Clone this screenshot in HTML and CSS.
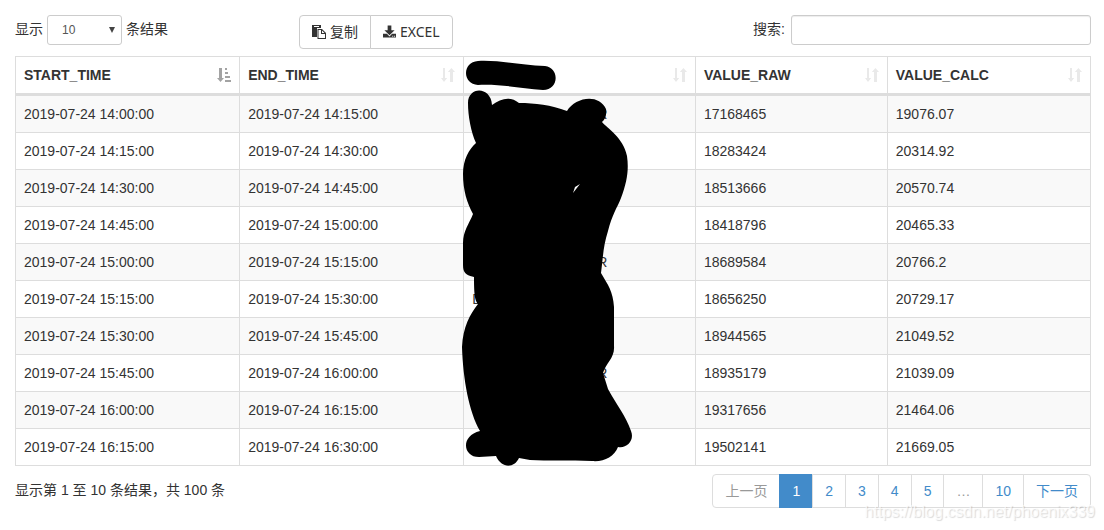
FILE: index.html
```html
<!DOCTYPE html>
<html lang="zh-CN">
<head>
<meta charset="utf-8">
<title>数据列表</title>
<link rel="stylesheet" href="styles.css">
</head>
<body>
<svg class="defs" width="0" height="0" aria-hidden="true">
  <symbol id="sort" viewBox="0 0 14 14">
    <path d="M2 0h2v10h2.200L3 14 0 10h2zM9 14V4H6.800L10.500 0l3.500 4h-2v10z"/>
  </symbol>
  <symbol id="sort-asc" viewBox="0 0 14 14">
    <path d="M2 0h3v10h2L3.500 14 0 10h2zM8 0h2v2H8zM8 4h3v2H8zM8 8h5v2H8zM8 12h6v2H8z"/>
  </symbol>
</svg>
<main class="page">
  <div class="toolbar">
    <label class="length">显示
      <span class="select-box"><select class="control length-select"><option>10</option><option>25</option><option>50</option></select><svg class="caret" viewBox="0 0 6 6" aria-hidden="true"><path d="M0 0h6L3 6z"/></svg></span>
      条结果</label>
    <div class="buttons">
      <button type="button" class="btn"><svg class="btn-icon" viewBox="0 0 14 14" aria-hidden="true"><path fill-rule="evenodd" d="M0 0h9v3H5v9H0zM2 1v1h5V1zM5.500 4H10l4 4v6H5.500zM6.500 5v8H13V9H9V5zM10 5.500V8h2.500z"/></svg>复制</button>
      <button type="button" class="btn"><svg class="btn-icon narrow" viewBox="0 0 14 14" aria-hidden="true"><path fill-rule="evenodd" d="M5 0h4v5h3.500L7 10.500 1.500 5H5zM0 9h4.200L7 11.800 9.800 9H14v4H0zM10 11v1h1v-1zM12 11v1h1v-1z"/></svg>EXCEL</button>
    </div>
    <label class="search">搜索:
      <input type="search" class="control search-input"></label>
  </div>
  <div class="table-wrap">
    <table class="grid">
      <colgroup><col class="c-start"><col class="c-end"><col class="c-name"><col class="c-raw"><col class="c-calc"></colgroup>
      <thead>
        <tr>
          <th><span class="head">START_TIME<svg class="sort active"><use href="#sort-asc"/></svg></span></th>
          <th><span class="head">END_TIME<svg class="sort"><use href="#sort"/></svg></span></th>
          <th><span class="head"><span></span><svg class="sort"><use href="#sort"/></svg></span></th>
          <th><span class="head">VALUE_RAW<svg class="sort"><use href="#sort"/></svg></span></th>
          <th><span class="head">VALUE_CALC<svg class="sort"><use href="#sort"/></svg></span></th>
        </tr>
      </thead>
      <tbody>
        <tr><td>2019-07-24 14:00:00</td><td>2019-07-24 14:15:00</td><td class="tail">R</td><td>17168465</td><td>19076.07</td></tr>
        <tr><td>2019-07-24 14:15:00</td><td>2019-07-24 14:30:00</td><td></td><td>18283424</td><td>20314.92</td></tr>
        <tr><td>2019-07-24 14:30:00</td><td>2019-07-24 14:45:00</td><td></td><td>18513666</td><td>20570.74</td></tr>
        <tr><td>2019-07-24 14:45:00</td><td>2019-07-24 15:00:00</td><td></td><td>18418796</td><td>20465.33</td></tr>
        <tr><td>2019-07-24 15:00:00</td><td>2019-07-24 15:15:00</td><td class="tail">R</td><td>18689584</td><td>20766.2</td></tr>
        <tr><td>2019-07-24 15:15:00</td><td>2019-07-24 15:30:00</td><td>D</td><td>18656250</td><td>20729.17</td></tr>
        <tr><td>2019-07-24 15:30:00</td><td>2019-07-24 15:45:00</td><td></td><td>18944565</td><td>21049.52</td></tr>
        <tr><td>2019-07-24 15:45:00</td><td>2019-07-24 16:00:00</td><td class="tail">R</td><td>18935179</td><td>21039.09</td></tr>
        <tr><td>2019-07-24 16:00:00</td><td>2019-07-24 16:15:00</td><td></td><td>19317656</td><td>21464.06</td></tr>
        <tr><td>2019-07-24 16:15:00</td><td>2019-07-24 16:30:00</td><td></td><td>19502141</td><td>21669.05</td></tr>
      </tbody>
    </table>
    <svg class="redaction" viewBox="450 56 200 412" width="200" height="412" aria-hidden="true">
      <path d="M478 61C500 60 520 65 545 66C560 68 559 90 543 90C520 88 500 84 478 85C462 84 462 62 478 61Z"/>
      <path fill-rule="evenodd" d="M468 103C468 86 491 86 492 105C501 98 511 96 519 103C535 103 551 105 567 111C575 97 599 93 606 109C607 115 605 120 602 122C607 128 623 137 627 156C629 170 627 182 621 198C617 208 612 215 608 231C603 247 603 258 601 273C608 285 613 291 614 307V346C615 358 606 363 603 373L608 389C616 404 626 416 631 431C635 441 626 449 618 447C614 457 604 462 592 461C570 460 547 461 530 460L519 458C514 469 501 468 496 456L479 457C463 457 460 436 480 431C469 412 463 379 462 347C463 327 470 314 478 304C475 300 474 296 474 277C466 275 463 273 463 265V243C463 231 469 224 473 214C467 203 463 190 463 174C463 160 469 149 476 143C471 132 468 116 468 103ZM580 184L575 187L573 193Z"/>
    </svg>
  </div>
  <footer class="footer">
    <div class="info">显示第 1 至 10 条结果，共 100 条</div>
    <nav class="paging" aria-label="分页">
      <a class="muted">上一页</a><a class="current" href="#" aria-current="page">1</a><a href="#">2</a><a href="#">3</a><a href="#">4</a><a href="#">5</a><a class="muted">…</a><a href="#">10</a><a href="#">下一页</a>
    </nav>
    <div class="watermark">https://blog.csdn.net/phoenix339</div>
  </footer>
</main>
</body>
</html>
```
FILE: styles.css
```css
* { box-sizing: border-box; }
body {
  margin: 0;
  background: #fff;
  color: #333;
  font: 14px/20px "Liberation Sans", "Noto Sans CJK SC", sans-serif;
}
.defs { position: absolute; }
.page { min-height: 100vh; padding: 15px 13px 0 15px; }
.toolbar {
  display: grid;
  grid-template-columns: 284px auto 1fr;
  align-items: start;
  height: 41px;
}
.length, .search { display: flex; align-items: flex-start; gap: 4px; line-height: 28px; }
.search { justify-content: flex-end; gap: 6px; }
.control {
  height: 30px;
  border: 1px solid #ccc;
  border-radius: 3px;
  background: #fff;
  color: #555;
  font: 12px/18px "Liberation Sans", sans-serif;
}
.select-box { position: relative; display: flex; }
.length-select { width: 75px; padding: 0 14px; appearance: none; }
.caret { position: absolute; right: 7px; top: 12px; width: 6px; height: 6px; fill: #444; pointer-events: none; }
.search-input { width: 300px; padding: 5px 10px; box-shadow: inset 0 1px 1px rgba(0, 0, 0, .075); }
.buttons { display: flex; }
.btn {
  display: flex;
  align-items: center;
  gap: 4px;
  height: 34px;
  padding: 0 12px;
  border: 1px solid #ccc;
  background: #fff;
  color: #333;
  font: 14px/20px "Noto Sans", "Noto Sans CJK SC", sans-serif;
}
.btn:first-child { border-radius: 4px 0 0 4px; }
.btn:last-child { margin-left: -1px; border-radius: 0 4px 4px 0; }
.btn-icon { width: 14px; height: 14px; fill: currentColor; }
.btn-icon.narrow { width: 13px; }
.table-wrap { position: relative; }
.grid { width: 100%; border-collapse: collapse; table-layout: fixed; }
.c-start, .c-end { width: 20.85%; }
.c-name { width: 21.55%; }
.c-raw { width: 17.85%; }
.c-calc { width: 18.9%; }
th, td { padding: 8px; border: 1px solid #ddd; text-align: left; }
th { border-bottom-width: 3px; }
tbody tr:nth-child(odd) { background: #f9f9f9; }
td { height: 37px; }
.tail { padding-left: 133px; }
.head { display: flex; justify-content: space-between; align-items: center; height: 20px; }
.sort { width: 14px; height: 14px; fill: #e9e9e9; }
.sort.active { fill: #a3a3a3; }
.redaction { position: absolute; left: 435px; top: 0; }
.footer { position: relative; display: flex; justify-content: space-between; align-items: flex-start; padding-top: 8px; }
.info { padding-top: 6px; }
.paging { display: flex; }
.paging a {
  height: 34px;
  margin-left: -1px;
  padding: 6px 12px;
  border: 1px solid #ddd;
  background: #fff;
  color: #428bca;
  text-decoration: none;
}
.paging a:first-child { border-radius: 4px 0 0 4px; }
.paging a:last-child { border-radius: 0 4px 4px 0; }
.paging .muted { color: #999; }
.paging .current { background: #428bca; border-color: #428bca; color: #fff; }
.watermark {
  position: absolute;
  right: -4px;
  bottom: -14px;
  color: rgba(255, 255, 255, .7);
  font-size: 16px;
  text-shadow: 1px 1px 1px rgba(0, 0, 0, .15);
  pointer-events: none;
}
```
